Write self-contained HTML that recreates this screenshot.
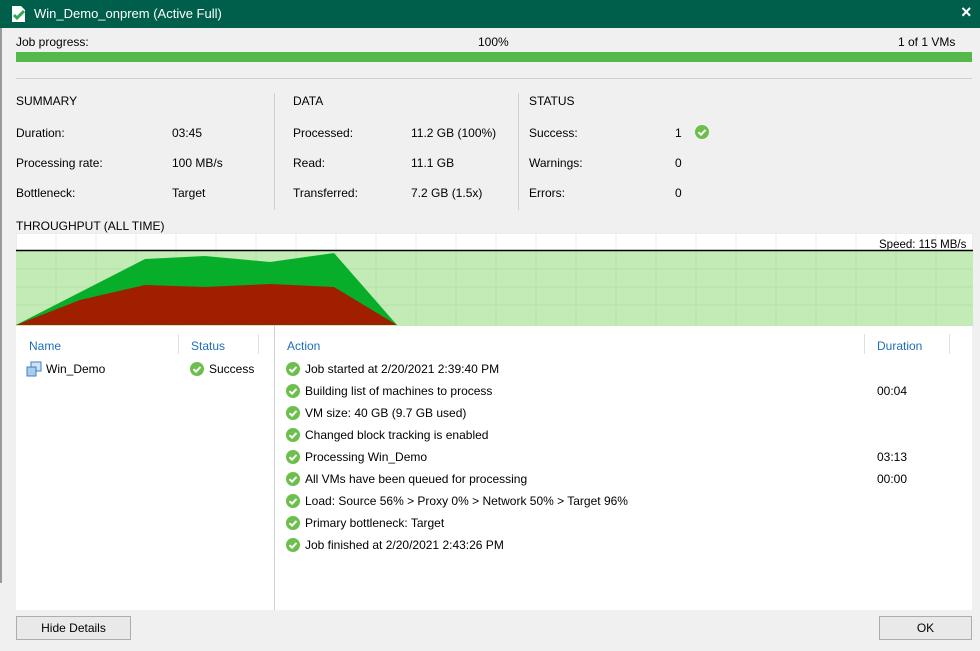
<!DOCTYPE html>
<html><head><style>
body{margin:0;width:980px;height:651px;background:#f0f0f0;font-family:"Liberation Sans",sans-serif;font-size:12px;color:#000;position:relative;overflow:hidden}
.a{position:absolute;white-space:nowrap}
.h{color:#1e6fb8}
.ck{position:absolute;width:14px;height:14px}
</style></head><body>
<div class="a" style="left:0;top:0;width:980px;height:28px;background:#005f4b"></div>
<svg class="a" style="left:10px;top:5px" width="18" height="18" viewBox="0 0 18 18"><path d="M2 1h9l4 4v12H2z" fill="#fff"/><path d="M4 10l3 3 7-7" stroke="#2fa84f" stroke-width="3" fill="none"/></svg>
<div class="a" style="left:34px;top:6px;color:#fff;font-size:13px">Win_Demo_onprem (Active Full)</div>
<div class="a" style="left:961px;top:2px;color:#fff;font-size:18px;font-weight:bold">×</div>
<div class="a" style="left:0;top:28px;width:2px;height:555px;background:#9a9a9a"></div>
<div class="a" style="left:16px;top:35px">Job progress:</div>
<div class="a" style="left:478px;top:35px">100%</div>
<div class="a" style="left:898px;top:35px">1 of 1 VMs</div>
<div class="a" style="left:16px;top:52px;width:956px;height:10px;background:#55b84a"></div>
<div class="a" style="left:16px;top:78px;width:956px;height:1px;background:#d0d0d0"></div>
<div class="a" style="left:16px;top:94px">SUMMARY</div>
<div class="a" style="left:293px;top:94px">DATA</div>
<div class="a" style="left:529px;top:94px">STATUS</div>
<div class="a" style="left:274px;top:93px;width:1px;height:117px;background:#d0d0d0"></div>
<div class="a" style="left:518px;top:93px;width:1px;height:117px;background:#d0d0d0"></div>
<div class="a" style="left:16px;top:126px">Duration:</div><div class="a" style="left:172px;top:126px">03:45</div>
<div class="a" style="left:16px;top:156px">Processing rate:</div><div class="a" style="left:172px;top:156px">100 MB/s</div>
<div class="a" style="left:16px;top:186px">Bottleneck:</div><div class="a" style="left:172px;top:186px">Target</div>
<div class="a" style="left:293px;top:126px">Processed:</div><div class="a" style="left:411px;top:126px">11.2 GB (100%)</div>
<div class="a" style="left:293px;top:156px">Read:</div><div class="a" style="left:411px;top:156px">11.1 GB</div>
<div class="a" style="left:293px;top:186px">Transferred:</div><div class="a" style="left:411px;top:186px">7.2 GB (1.5x)</div>
<div class="a" style="left:529px;top:126px">Success:</div><div class="a" style="left:675px;top:126px">1</div>
<div class="a" style="left:529px;top:156px">Warnings:</div><div class="a" style="left:675px;top:156px">0</div>
<div class="a" style="left:529px;top:186px">Errors:</div><div class="a" style="left:675px;top:186px">0</div>
<svg class="ck" style="left:695px;top:125px" viewBox="0 0 14 14"><circle cx="7" cy="7" r="7" fill="#6cbf4c"/><path d="M3.5 7.2l2.5 2.5 4.5-4.8" stroke="#fff" stroke-width="2" fill="none"/></svg>
<div class="a" style="left:16px;top:219px">THROUGHPUT (ALL TIME)</div>
<svg class="a" style="left:16px;top:233px" width="957" height="93" viewBox="0 0 957 93">
<rect x="0" y="0" width="957" height="93" fill="#fff" stroke="#d8d8d8"/>
<rect x="0" y="18" width="957" height="75" fill="#c2ebb6"/>
<g stroke="#ececec"><path d="M40 0v18M80 0v18M120 0v18M160 0v18M200 0v18M240 0v18M280 0v18M320 0v18M360 0v18M400 0v18M440 0v18M480 0v18M520 0v18M560 0v18M600 0v18M640 0v18M680 0v18M720 0v18M760 0v18M800 0v18M840 0v18M880 0v18M920 0v18"/></g>
<g stroke="#b5dfa8"><path d="M40 18v75M80 18v75M120 18v75M160 18v75M200 18v75M240 18v75M280 18v75M320 18v75M360 18v75M400 18v75M440 18v75M480 18v75M520 18v75M560 18v75M600 18v75M640 18v75M680 18v75M720 18v75M760 18v75M800 18v75M840 18v75M880 18v75M920 18v75M0 36h957M0 54h957M0 72h957"/></g>
<path d="M0 92L129 26 189 23 254 29 318 20 381 92z" fill="#07ae2a"/>
<path d="M0 92L64 67 129 52 189 54 254 51 318 54 381 92z" fill="#a01f00"/>
<path d="M0 17.5h957" stroke="#000" stroke-width="1.5"/>
<text x="863" y="15" font-size="11.5" font-family="Liberation Sans" fill="#000">Speed: 115 MB/s</text>
</svg>
<div class="a" style="left:16px;top:326px;width:956px;height:284px;background:#fff"></div>
<div class="a" style="left:274px;top:326px;width:1px;height:284px;background:#d0d0d0"></div>
<div class="a" style="left:178px;top:334px;width:1px;height:20px;background:#e0e0e0"></div>
<div class="a" style="left:258px;top:334px;width:1px;height:20px;background:#e0e0e0"></div>
<div class="a" style="left:864px;top:334px;width:1px;height:20px;background:#e0e0e0"></div>
<div class="a" style="left:949px;top:334px;width:1px;height:20px;background:#e0e0e0"></div>
<div class="a h" style="left:29px;top:339px">Name</div>
<div class="a h" style="left:191px;top:339px">Status</div>
<div class="a h" style="left:287px;top:339px">Action</div>
<div class="a h" style="left:877px;top:339px">Duration</div>
<svg class="a" style="left:26px;top:361px" width="16" height="16" viewBox="0 0 16 16"><rect x="5" y="1" width="10" height="9" fill="#cfe3f5" stroke="#3c7fc0"/><rect x="1" y="6" width="9" height="9" fill="#a9cdee" stroke="#3c7fc0"/></svg>
<div class="a" style="left:46px;top:362px">Win_Demo</div>
<svg class="ck" style="left:190px;top:362px" viewBox="0 0 14 14"><circle cx="7" cy="7" r="7" fill="#6cbf4c"/><path d="M3.5 7.2l2.5 2.5 4.5-4.8" stroke="#fff" stroke-width="2" fill="none"/></svg>
<div class="a" style="left:209px;top:362px">Success</div>
<div class="a" style="left:305px;top:362px">Job started at 2/20/2021 2:39:40 PM</div>
<div class="a" style="left:305px;top:384px">Building list of machines to process</div>
<div class="a" style="left:305px;top:406px">VM size: 40 GB (9.7 GB used)</div>
<div class="a" style="left:305px;top:428px">Changed block tracking is enabled</div>
<div class="a" style="left:305px;top:450px">Processing Win_Demo</div>
<div class="a" style="left:305px;top:472px">All VMs have been queued for processing</div>
<div class="a" style="left:305px;top:494px">Load: Source 56% &gt; Proxy 0% &gt; Network 50% &gt; Target 96%</div>
<div class="a" style="left:305px;top:516px">Primary bottleneck: Target</div>
<div class="a" style="left:305px;top:538px">Job finished at 2/20/2021 2:43:26 PM</div>
<div class="a" style="left:877px;top:384px">00:04</div>
<div class="a" style="left:877px;top:450px">03:13</div>
<div class="a" style="left:877px;top:472px">00:00</div>
<svg class="a" style="left:286px;top:362px" width="14" height="190" viewBox="0 0 14 190">
<defs><g id="c"><circle cx="7" cy="7" r="7" fill="#6cbf4c"/><path d="M3.5 7.2l2.5 2.5 4.5-4.8" stroke="#fff" stroke-width="2" fill="none"/></g></defs>
<use href="#c" y="0"/><use href="#c" y="22"/><use href="#c" y="44"/><use href="#c" y="66"/><use href="#c" y="88"/><use href="#c" y="110"/><use href="#c" y="132"/><use href="#c" y="154"/><use href="#c" y="176"/>
</svg>
<div class="a" style="left:16px;top:616px;width:113px;height:22px;border:1px solid #adadad;background:#e9e9e9;text-align:center;line-height:22px">Hide Details</div>
<div class="a" style="left:879px;top:616px;width:91px;height:22px;border:1px solid #adadad;background:#e9e9e9;text-align:center;line-height:22px">OK</div>
</body></html>
